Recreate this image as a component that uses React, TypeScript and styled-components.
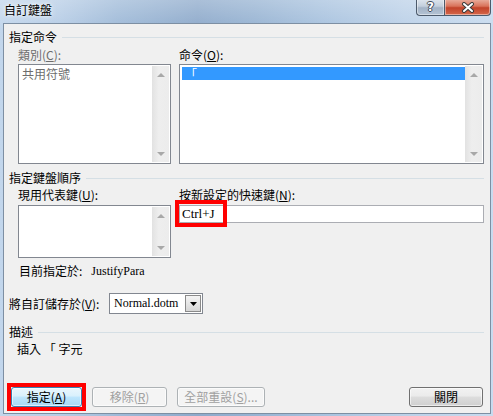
import styled, { createGlobalStyle } from "styled-components";

const GlobalStyle = createGlobalStyle`
  html, body {
    margin: 0;
    padding: 0;
  }
  body {
    font-family: "Noto Sans CJK TC", "Noto Sans", sans-serif;
    font-size: 12px;
    color: #000;
  }
`;

const App = () => {
  return (
    <>
      <GlobalStyle />
      <Window>
        <TitleBar>
          <Title>自訂鍵盤</Title>
          <Captions>
            <CaptionButton $kind="help">
              <HelpGlyph>?</HelpGlyph>
            </CaptionButton>
            <CaptionButton $kind="close">
              <svg width="14" height="11" viewBox="0 0 14 11">
                <path d="M3 2 L11 9 M11 2 L3 9" stroke="#3b3b3b" strokeWidth="4" strokeLinecap="round" />
                <path d="M3 2 L11 9 M11 2 L3 9" stroke="#fff" strokeWidth="2" strokeLinecap="round" />
              </svg>
            </CaptionButton>
          </Captions>
        </TitleBar>

        <Client>
          <GroupHeader>
            <span>指定命令</span>
            <Rule />
          </GroupHeader>

          <Row $top={4}>
            <LeftCol>
              <FieldLabel $disabled>
                類別(<u>C</u>):
              </FieldLabel>
              <ListBox $height={100}>
                <ListItems>
                  <ListRow $disabled>共用符號</ListRow>
                </ListItems>
                <ScrollBar>
                  <Arrow $dir="up" />
                  <Arrow $dir="down" />
                </ScrollBar>
              </ListBox>
            </LeftCol>
            <RightCol>
              <FieldLabel>
                命令(<u>O</u>):
              </FieldLabel>
              <ListBox $height={100}>
                <ListItems>
                  <ListRow $selected>「</ListRow>
                </ListItems>
                <ScrollBar>
                  <Arrow $dir="up" />
                  <Arrow $dir="down" />
                </ScrollBar>
              </ListBox>
            </RightCol>
          </Row>

          <GroupHeader $top={7}>
            <span>指定鍵盤順序</span>
            <Rule />
          </GroupHeader>

          <Row $top={3}>
            <LeftCol>
              <FieldLabel $gap={3}>
                現用代表鍵(<u>U</u>):
              </FieldLabel>
              <ListBox $height={53}>
                <ListItems />
                <ScrollBar>
                  <Arrow $dir="up" />
                  <Arrow $dir="down" />
                </ScrollBar>
              </ListBox>
            </LeftCol>
            <RightCol>
              <FieldLabel $gap={3}>
                按新設定的快速鍵(<u>N</u>):
              </FieldLabel>
              <InputWrap>
                <TextInput>Ctrl+J</TextInput>
                <Highlight $left={-4} $top={-5} $width={52} $height={27} />
              </InputWrap>
            </RightCol>
          </Row>

          <CurrentLine>
            目前指定於:
            <Value>JustifyPara</Value>
          </CurrentLine>

          <SaveRow>
            <SaveLabel>
              將自訂儲存於(<u>V</u>):
            </SaveLabel>
            <Combo>
              <ComboValue>Normal.dotm</ComboValue>
              <ComboButton>
                <svg width="7" height="4" viewBox="0 0 7 4">
                  <path d="M0 0 H7 L3.5 4 Z" fill="#000" />
                </svg>
              </ComboButton>
            </Combo>
          </SaveRow>

          <GroupHeader $top={11}>
            <span>描述</span>
            <Rule />
          </GroupHeader>

          <Description>插入 「 字元</Description>

          <ButtonBar>
            <ButtonGroup>
              <HighlightWrap>
                <Button $variant="default" $width={71}>
                  指定(<u>A</u>)
                </Button>
                <Highlight $left={-4} $top={-4} $width={79} $height={28} />
              </HighlightWrap>
              <Button $variant="disabled" $width={75}>
                移除(<u>R</u>)
              </Button>
              <Button $variant="disabled" $width={88}>
                全部重設(<u>S</u>)...
              </Button>
            </ButtonGroup>
            <Button $variant="normal" $width={74}>
              關閉
            </Button>
          </ButtonBar>
        </Client>
      </Window>
    </>
  );
};

export default App;

const Window = styled.div`
  width: 493px;
  height: 416px;
  box-sizing: border-box;
  padding: 0 2px 2px 3px;
  display: flex;
  flex-direction: column;
  background:
    linear-gradient(180deg, rgba(255, 255, 255, 0.25) 0%, rgba(255, 255, 255, 0) 30px),
    linear-gradient(
      90deg,
      #c2d6ec 0%,
      #b7cde6 12%,
      #9fbad8 24%,
      #8eaacb 40%,
      #98b4d3 52%,
      #a9c3df 66%,
      #bcd1e8 82%,
      #c8dbef 100%
    );
  overflow: hidden;
`;

const TitleBar = styled.div`
  height: 23px;
  display: flex;
  justify-content: space-between;
  align-items: flex-start;
  flex-shrink: 0;
`;

const Title = styled.div`
  margin: 3px 0 0 1px;
  line-height: 14px;
  font-size: 12px;
  color: #000;
  text-shadow: 0 0 6px rgba(255, 255, 255, 0.9), 0 0 3px rgba(255, 255, 255, 0.9);
`;

const Captions = styled.div`
  display: flex;
  margin-top: -1px;
`;

const CaptionButton = styled.div<{ $kind: "help" | "close" }>`
  width: ${(p) => (p.$kind === "help" ? "28px" : "47px")};
  height: 17px;
  box-sizing: border-box;
  display: flex;
  align-items: center;
  justify-content: center;
  border: 1px solid #4c5a6b;
  border-top: none;
  border-radius: ${(p) => (p.$kind === "help" ? "0 0 0 4px" : "0 0 4px 0")};
  ${(p) =>
    p.$kind === "help"
      ? `
    border-right: none;
    background: linear-gradient(180deg, #dfe6ee 0%, #c3cfdc 45%, #a3b3c6 55%, #b4c3d4 100%);
  `
      : `
    background: linear-gradient(180deg, #eab2a2 0%, #d9735b 45%, #c2432a 55%, #d5674a 100%);
  `}
  box-shadow: inset 0 0 0 1px rgba(255, 255, 255, 0.45);
`;

const HelpGlyph = styled.span`
  font-family: "DejaVu Sans", sans-serif;
  font-weight: bold;
  font-size: 12px;
  line-height: 12px;
  color: #fff;
  text-shadow: -1px 0 #3d4856, 1px 0 #3d4856, 0 -1px #3d4856, 0 1px #3d4856;
`;

const Client = styled.div`
  flex: 1;
  display: flex;
  flex-direction: column;
  box-sizing: border-box;
  padding: 6px 6px 6px 5px;
  background: #f0f0f0;
  border: 1px solid #7d8fa3;
`;

const GroupHeader = styled.div<{ $top?: number }>`
  display: flex;
  align-items: center;
  line-height: 14px;
  height: 14px;
  margin-top: ${(p) => p.$top ?? 0}px;
`;

const Rule = styled.div`
  flex: 1;
  height: 1px;
  margin-left: 5px;
  background: #d5dfe5;
`;

const Row = styled.div<{ $top: number }>`
  display: flex;
  gap: 8px;
  margin: ${(p) => p.$top}px 0 0 9px;
`;

const LeftCol = styled.div`
  width: 153px;
  display: flex;
  flex-direction: column;
`;

const RightCol = styled.div`
  flex: 1;
  display: flex;
  flex-direction: column;
`;

const FieldLabel = styled.div<{ $disabled?: boolean; $gap?: number }>`
  line-height: 14px;
  height: 14px;
  margin-bottom: ${(p) => p.$gap ?? 2}px;
  color: ${(p) => (p.$disabled ? "#6d6d6d" : "#000")};
  white-space: nowrap;
`;

const ListBox = styled.div<{ $height: number }>`
  height: ${(p) => p.$height}px;
  box-sizing: border-box;
  border: 1px solid #828790;
  background: #fff;
  padding: 1px;
  display: flex;
`;

const ListItems = styled.div`
  flex: 1;
  padding: 1px 0 0 1px;
`;

const ListRow = styled.div<{ $selected?: boolean; $disabled?: boolean }>`
  height: 13px;
  line-height: 13px;
  padding-left: ${(p) => (p.$selected ? "3px" : "1px")};
  background: ${(p) => (p.$selected ? "#3399ff" : "transparent")};
  color: ${(p) => (p.$selected ? "#fff" : p.$disabled ? "#6d6d6d" : "#000")};
  white-space: nowrap;
`;

const ScrollBar = styled.div`
  width: 17px;
  display: flex;
  flex-direction: column;
  justify-content: space-between;
  align-items: center;
  padding: 7px 0 6px;
  box-sizing: border-box;
  background: linear-gradient(90deg, #e2e2e2 0%, #eeeeee 40%, #ececec 100%);
`;

const Arrow = styled.div<{ $dir: "up" | "down" }>`
  width: 0;
  height: 0;
  border-left: 4px solid transparent;
  border-right: 4px solid transparent;
  ${(p) =>
    p.$dir === "up"
      ? "border-bottom: 4px solid #a8a8a8;"
      : "border-top: 4px solid #a8a8a8;"}
`;

const InputWrap = styled.div`
  position: relative;
`;

const TextInput = styled.div`
  height: 18px;
  box-sizing: border-box;
  border: 1px solid #abadb3;
  background: #fff;
  padding-left: 2px;
  font-family: "Liberation Serif", serif;
  font-size: 13px;
  line-height: 16px;
`;

const Highlight = styled.div<{ $left: number; $top: number; $width: number; $height: number }>`
  position: absolute;
  left: ${(p) => p.$left}px;
  top: ${(p) => p.$top}px;
  width: ${(p) => p.$width}px;
  height: ${(p) => p.$height}px;
  box-sizing: border-box;
  border: 4px solid #ff0000;
  pointer-events: none;
`;

const CurrentLine = styled.div`
  margin: 6px 0 0 10px;
  line-height: 14px;
  height: 14px;
  display: flex;
`;

const Value = styled.span`
  margin-left: 9px;
  font-family: "Liberation Serif", serif;
  font-size: 12px;
`;

const SaveRow = styled.div`
  display: flex;
  align-items: center;
  margin-top: 15px;
  height: 21px;
`;

const SaveLabel = styled.div`
  width: 100px;
  white-space: nowrap;
`;

const Combo = styled.div`
  width: 94px;
  height: 21px;
  box-sizing: border-box;
  border: 1px solid #828790;
  background: #fff;
  display: flex;
  align-items: center;
  padding: 1px;
`;

const ComboValue = styled.div`
  flex: 1;
  padding-left: 3px;
  font-family: "Liberation Serif", serif;
  font-size: 12px;
  line-height: 17px;
  white-space: nowrap;
  overflow: hidden;
`;

const ComboButton = styled.div`
  width: 16px;
  height: 17px;
  flex-shrink: 0;
  box-sizing: border-box;
  border: 1px solid #8a8a8a;
  background: linear-gradient(180deg, #f4f4f4 0%, #e6e6e6 50%, #d6d6d6 100%);
  display: flex;
  align-items: center;
  justify-content: center;
`;

const Description = styled.div`
  margin: 3px 0 0 8px;
  line-height: 14px;
  height: 14px;
  white-space: pre;
`;

const ButtonBar = styled.div`
  margin-top: auto;
  display: flex;
  justify-content: space-between;
  padding: 0 1px 0 2px;
`;

const ButtonGroup = styled.div`
  display: flex;
  gap: 10px;
`;

const HighlightWrap = styled.div`
  position: relative;
  display: flex;
`;

const Button = styled.div<{ $variant: "default" | "normal" | "disabled"; $width: number }>`
  width: ${(p) => p.$width}px;
  height: 20px;
  box-sizing: border-box;
  display: flex;
  align-items: center;
  justify-content: center;
  border-radius: 3px;
  line-height: 14px;
  ${(p) =>
    p.$variant === "default"
      ? `
    border: 1px solid #3c7fb1;
    background: linear-gradient(180deg, #eaf6fd 0%, #d9f0fc 45%, #bee6fd 50%, #a7d9f5 100%);
    color: #000;
  `
      : p.$variant === "disabled"
      ? `
    border: 1px solid #adb2b5;
    background: #f4f4f4;
    color: #a0a0a0;
  `
      : `
    border: 1px solid #707070;
    background: linear-gradient(180deg, #f2f2f2 0%, #ebebeb 45%, #dddddd 50%, #cfcfcf 100%);
    color: #000;
  `}
  box-shadow: inset 0 0 0 1px rgba(255, 255, 255, 0.6);
`;
